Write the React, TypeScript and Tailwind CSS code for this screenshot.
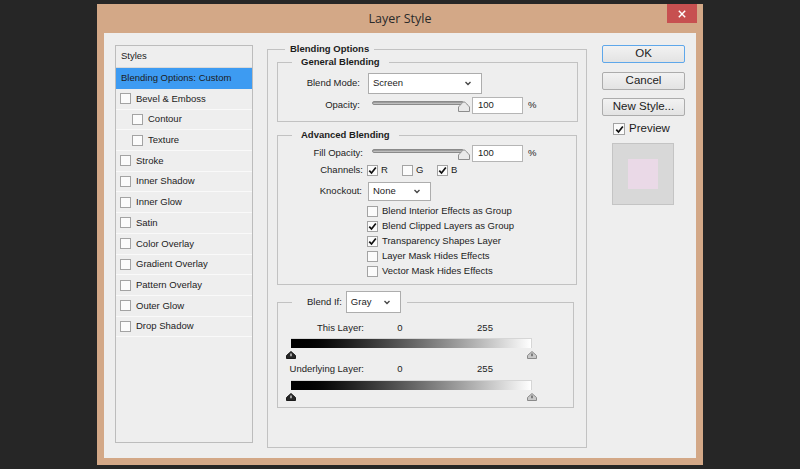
import type { ReactNode } from 'react'

const font = "font-['Liberation_Sans',Arial,sans-serif]"

function Box ({ checked, size = 'h-[11px] w-[11px]' }: { checked?: boolean, size?: string }) {
  return (
    <span className={`flex shrink-0 items-center justify-center border border-[#a3a3a3] bg-[#fbfbfb] ${size}`}>
      {checked && (
        <svg viewBox='0 0 10 10' className='h-[9px] w-[9px]'>
          <path d='M1.4 5.1 L3.9 7.8 L8.7 1.6' fill='none' stroke='#111' strokeWidth='1.9' />
        </svg>
      )}
    </span>
  )
}

function Chevron () {
  return (
    <svg viewBox='0 0 8 6' className='h-[5px] w-[8px]'>
      <path d='M1 1.2 L4 4.3 L7 1.2' fill='none' stroke='#444' strokeWidth='1.6' />
    </svg>
  )
}

function Select ({ value, className }: { value: string, className: string }) {
  return (
    <div className={`flex items-center justify-between border border-[#adadad] bg-white pl-[4px] pr-[9px] ${className}`}>
      <span>{value}</span>
      <Chevron />
    </div>
  )
}

function Slider () {
  return (
    <div className='relative h-[12px] w-[104px]'>
      <div className='ml-[4px] mt-[2px] h-[4px] w-[92px] rounded-full border border-[#8a8a8a] bg-gradient-to-b from-[#8c8c8c] to-[#cfcfcf]' />
      <svg viewBox='0 0 12 11' className='absolute left-[90px] top-0 h-[11px] w-[12px]'>
        <path d='M0.5 10.5 V6 C2.5 4 4 1.5 6 0.8 C8 1.5 9.5 4 11.5 6 V10.5 Z' fill='#e9e9e9' stroke='#8d8d8d' />
      </svg>
    </div>
  )
}

function Field ({ value }: { value: string }) {
  return (
    <div className='flex h-[17px] w-[51px] items-center border border-[#b5b5b5] bg-white pl-[5px]'>{value}</div>
  )
}

function Thumb ({ dark }: { dark?: boolean }) {
  return (
    <svg viewBox='0 0 10 8' className='h-[8px] w-[10px]'>
      <path d='M0.5 7.5 V4.5 L5 0.5 L9.5 4.5 V7.5 Z' fill={dark ? '#262626' : '#c9c9c9'} stroke={dark ? '#1a1a1a' : '#8a8a8a'} />
      <path d='M5 2.6 V5.2' stroke={dark ? '#f0f0f0' : '#4a4a4a'} strokeWidth='1.2' />
    </svg>
  )
}

function GradientBar () {
  return (
    <div className='ml-[13px] w-[241px]'>
      <div className='h-[10px] border-r border-t border-[#d6d6d6] bg-gradient-to-r from-black to-white' />
      <div className='mt-[3px] flex justify-between'>
        <div className='-ml-[5px]'><Thumb dark /></div>
        <div className='-mr-[5px]'><Thumb /></div>
      </div>
    </div>
  )
}

function Row ({ label, width, children, className = '' }: { label: string, width: string, children: ReactNode, className?: string }) {
  return (
    <div className={`flex items-center ${className}`}>
      <span className={`shrink-0 text-right ${width}`}>{label}</span>
      {children}
    </div>
  )
}

const styleItems = [
  { label: 'Bevel & Emboss' },
  { label: 'Contour', sub: true },
  { label: 'Texture', sub: true },
  { label: 'Stroke' },
  { label: 'Inner Shadow' },
  { label: 'Inner Glow' },
  { label: 'Satin' },
  { label: 'Color Overlay' },
  { label: 'Gradient Overlay' },
  { label: 'Pattern Overlay' },
  { label: 'Outer Glow' },
  { label: 'Drop Shadow' }
]

const knockoutChecks = [
  { label: 'Blend Interior Effects as Group', checked: false },
  { label: 'Blend Clipped Layers as Group', checked: true },
  { label: 'Transparency Shapes Layer', checked: true },
  { label: 'Layer Mask Hides Effects', checked: false },
  { label: 'Vector Mask Hides Effects', checked: false }
]

export default function App () {
  return (
    <div className={`h-[469px] w-[800px] overflow-hidden bg-[#262626] pl-[97px] pt-[4px] text-[9.5px] text-[#1c1c1c] ${font}`}>
      <div className='flex h-[461px] w-[606px] flex-col bg-[#d3a887] px-[7px] pb-[7px]'>
        {/* title bar */}
        <div className='relative flex h-[29px] shrink-0 items-center justify-center'>
          <span className="pt-[2px] font-['Open_Sans',sans-serif] text-[12.5px] text-[#2a2a2a]">Layer Style</span>
          <div className='absolute right-[-1px] top-0 flex h-[19px] w-[30px] items-center justify-center bg-[#c75050]'>
            <svg viewBox='0 0 10 10' className='h-[8px] w-[8px]'>
              <path d='M1 1 L9 9 M9 1 L1 9' stroke='#fff' strokeWidth='1.8' />
            </svg>
          </div>
        </div>

        {/* client area */}
        <div className='flex flex-1 items-start bg-[#eeeeee] pl-[11px]'>
          {/* styles list */}
          <div className='mt-[12px] h-[398px] w-[138px] shrink-0 border border-[#bcbcbc]'>
            <div className='flex h-[22px] items-center border-b border-[#d9d9d9] pl-[5px]'>Styles</div>
            <div className='flex h-[21px] items-center bg-[#3d9bf2] pl-[5px]'>Blending Options: Custom</div>
            {styleItems.map((it) => (
              <div key={it.label} className={`flex h-[20.7px] items-center gap-[5px] border-b border-[#f9f9f9] ${it.sub ? 'pl-[16px]' : 'pl-[4px]'}`}>
                <Box />
                <span>{it.label}</span>
              </div>
            ))}
          </div>

          {/* blending options */}
          <fieldset className='ml-[14px] mt-[9px] h-[406px] w-[320px] shrink-0 border border-[#c2c2c2] pl-[9px]'>
            <legend className='ml-[8px] px-[5px] font-bold leading-[14px]'>Blending Options</legend>

            <fieldset className='-mt-[1px] h-[67px] w-[301px] border border-[#c2c2c2]'>
              <legend className='ml-[14px] px-[9px] font-bold leading-[14px]'>General Blending</legend>
              <Row label='Blend Mode:' width='w-[82px]' className='mt-[4px]'>
                <Select value='Screen' className='ml-[8px] h-[21px] w-[114px]' />
              </Row>
              <Row label='Opacity:' width='w-[82px]' className='mt-[3px]'>
                <div className='ml-[8px]'><Slider /></div>
                <Field value='100' />
                <span className='ml-[5px]'>%</span>
              </Row>
            </fieldset>

            <fieldset className='mt-[6px] h-[157px] w-[300px] border border-[#c2c2c2]'>
              <legend className='ml-[14px] px-[9px] font-bold leading-[14px]'>Advanced Blending</legend>
              <Row label='Fill Opacity:' width='w-[85px]' className='mt-[3px]'>
                <div className='ml-[5px]'><Slider /></div>
                <Field value='100' />
                <span className='ml-[5px]'>%</span>
              </Row>
              <Row label='Channels:' width='w-[85px]' className='h-[17px]'>
                <div className='ml-[4px] flex'>
                  {[['R', true], ['G', false], ['B', true]].map(([c, on]) => (
                    <span key={c as string} className='flex w-[35px] items-center gap-[3px]'>
                      <Box checked={on as boolean} />
                      <span>{c as string}</span>
                    </span>
                  ))}
                </div>
              </Row>
              <Row label='Knockout:' width='w-[84px]' className='mt-[3px]'>
                <Select value='None' className='ml-[6px] h-[19px] w-[63px]' />
              </Row>
              <div className='mt-[3px] pl-[89px]'>
                {knockoutChecks.map((c) => (
                  <div key={c.label} className='flex h-[15px] items-center gap-[4px]'>
                    <Box checked={c.checked} />
                    <span>{c.label}</span>
                  </div>
                ))}
              </div>
            </fieldset>

            <fieldset className='mt-[6px] h-[117px] w-[297px] border border-[#c2c2c2]'>
              <legend className='ml-[14px] flex items-center pl-[15px] pr-[6px]'>
                <span>Blend If:</span>
                <Select value='Gray' className='ml-[4px] h-[22px] w-[55px]' />
              </legend>
              <div className='mt-[8px] flex h-[14px] items-center'>
                <span className='w-[86px] text-right'>This Layer:</span>
                <span className='w-[72px] text-center'>0</span>
                <span className='w-[98px] text-center'>255</span>
              </div>
              <div className='mt-[3px]'><GradientBar /></div>
              <div className='mt-[3px] flex h-[14px] items-center'>
                <span className='w-[86px] text-right'>Underlying Layer:</span>
                <span className='w-[72px] text-center'>0</span>
                <span className='w-[98px] text-center'>255</span>
              </div>
              <div className='mt-[4px]'><GradientBar /></div>
            </fieldset>
          </fieldset>

          {/* right column */}
          <div className='ml-[15px] mt-[12px] flex w-[83px] flex-col text-[11.5px]'>
            <button className='h-[18px] rounded-[2px] border border-[#5ea7ea] bg-gradient-to-b from-[#f2f2f2] to-[#e3e3e3] leading-none'>OK</button>
            <button className='mt-[9px] h-[18px] rounded-[2px] border border-[#acacac] bg-gradient-to-b from-[#f2f2f2] to-[#e3e3e3] leading-none'>Cancel</button>
            <button className='mt-[8px] h-[18px] rounded-[2px] border border-[#acacac] bg-gradient-to-b from-[#f2f2f2] to-[#e3e3e3] leading-none'>New Style...</button>
            <div className='ml-[11px] mt-[6px] flex h-[14px] items-center gap-[4px]'>
              <Box checked size='h-[12px] w-[12px]' />
              <span>Preview</span>
            </div>
            <div className='ml-[10px] mt-[7px] flex h-[62px] w-[62px] items-center justify-center border border-[#c4c4c4] bg-[#d8d8d8]'>
              <div className='h-[30px] w-[30px] bg-[#ead9e7]' />
            </div>
          </div>
        </div>
      </div>
    </div>
  )
}
